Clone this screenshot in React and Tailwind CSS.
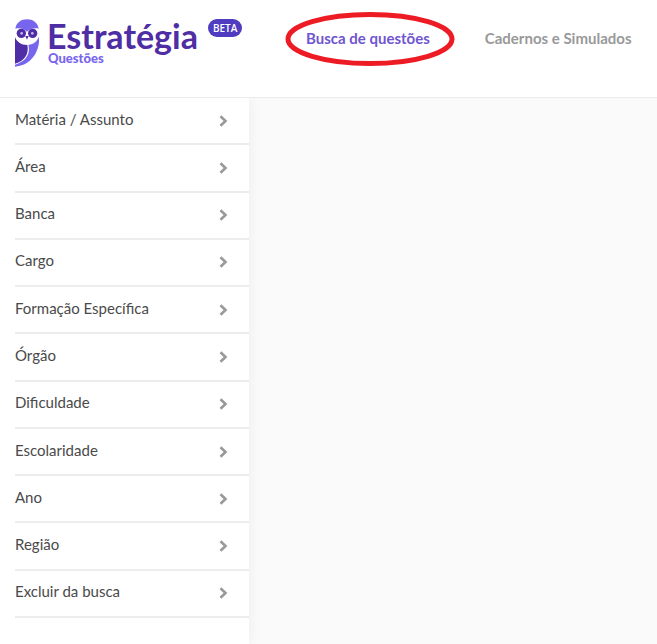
const filters = [
  'Matéria / Assunto',
  'Área',
  'Banca',
  'Cargo',
  'Formação Específica',
  'Órgão',
  'Dificuldade',
  'Escolaridade',
  'Ano',
  'Região',
  'Excluir da busca',
];

function OwlLogo() {
  return (
    <svg viewBox="0 0 72 144" className="h-12 w-6 shrink-0" aria-hidden="true">
      <path d="M1 29C4 11 18 1 36 1s32 10 35 28C58 26 45 29 36 38 27 29 14 26 1 29Z" fill="#7765ee" />
      <path d="M72 52c4 42-22 88-72 91v-6c32-9 47-31 40-59 16-2 28-11 32-26Z" fill="#7765ee" />
      <path d="M0 54c5 14 18 24 37 24 6 27-9 48-37 56Z" fill="#4f2da4" />
      <circle cx="19" cy="43" r="14" fill="#4f2da4" />
      <circle cx="53" cy="43" r="14" fill="#4f2da4" />
      <circle cx="20" cy="43" r="4" fill="#c4baea" />
      <circle cx="52" cy="43" r="4" fill="#c4baea" />
      <path d="M31 51h10l-5 11Z" fill="#4f2da4" />
    </svg>
  );
}

function Chevron() {
  return (
    <svg viewBox="0 0 9 12" className="h-3 w-[9px]" fill="none" stroke="#999" strokeWidth="2.6" aria-hidden="true">
      <path d="M1.5 1.2L6.5 6l-5 4.8" />
    </svg>
  );
}

function Header() {
  return (
    <header className="flex h-[98px] items-start border-b border-[#ebebeb] bg-white pl-[15px]">
      <a href="#" className="flex w-[270px] shrink-0 items-start pt-[19px]">
        <OwlLogo />
        <span className="ml-2 flex flex-col text-[#4f2da4]">
          <span className="text-[34px] leading-[34px] font-bold">Estratégia</span>
          <span className="pl-px text-[13px] leading-[10px] font-black text-[#7765ee]">Questões</span>
        </span>
        <span className="ml-[10px] rounded-full bg-[#4f3cc0] px-[5px] font-['Open_Sans',sans-serif] text-[10px] leading-[18px] font-semibold text-white">
          BETA
        </span>
      </a>
      <nav className="flex gap-[55px] pt-7 pl-[21px] text-[15px] leading-5 font-bold whitespace-nowrap">
        <a href="#" className="relative text-[#6f55cf]">
          Busca de questões
          <svg
            viewBox="0 0 170 54"
            className="absolute -top-4 -left-[21px] h-[54px] w-[170px] max-w-none"
            aria-hidden="true"
          >
            <ellipse cx="85" cy="27" rx="82" ry="24.5" fill="none" stroke="#ed1c24" strokeWidth="5" />
          </svg>
        </a>
        <a href="#" className="text-[#999]">
          Cadernos e Simulados
        </a>
      </nav>
    </header>
  );
}

export default function App() {
  return (
    <div className="flex min-h-screen flex-col bg-[#fafafa] font-['Lato',sans-serif]">
      <Header />
      <div className="flex flex-1">
        <aside className="w-[249px] shrink-0 bg-white pl-[15px] shadow-[0_0_14px_rgba(0,0,0,0.06)] [clip-path:inset(0_-20px_0_0)]">
          <ul className="grid h-[520px] auto-rows-fr">
            {filters.map((label) => (
              <li key={label} className="border-b-2 border-[#ededed]">
                <button
                  type="button"
                  className="flex h-full w-full items-center justify-between pr-[21px] text-left text-[15px] leading-5 text-[#4a4a4a]"
                >
                  <span className="pb-1">{label}</span>
                  <Chevron />
                </button>
              </li>
            ))}
          </ul>
        </aside>
        <main className="flex-1" />
      </div>
    </div>
  );
}
